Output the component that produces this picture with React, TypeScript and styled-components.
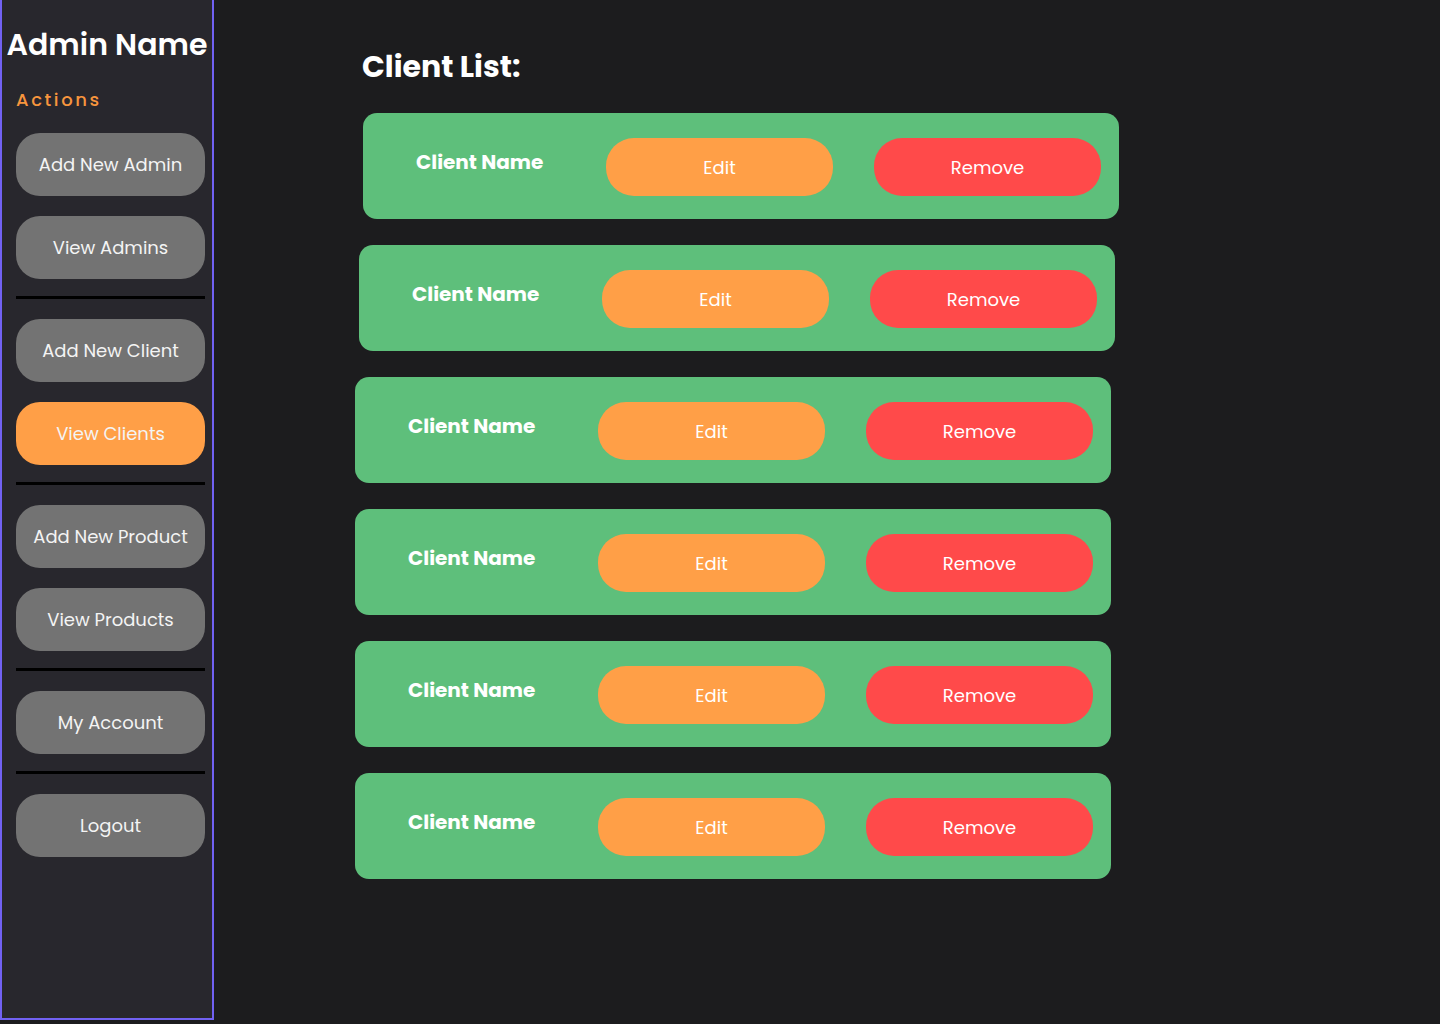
import React from "react";
import styled, { createGlobalStyle } from "styled-components";

const GlobalStyle = createGlobalStyle`
  * {
    box-sizing: border-box;
  }
  body {
    margin: 0;
    background: #1c1c1e;
    font-family: "Poppins", "Inter", "Noto Sans", sans-serif;
    color: #ffffff;
  }
`;

type NavItem = { label: string; active?: boolean } | "divider";

const navItems: NavItem[] = [
  { label: "Add New Admin" },
  { label: "View Admins" },
  "divider",
  { label: "Add New Client" },
  { label: "View Clients", active: true },
  "divider",
  { label: "Add New Product" },
  { label: "View Products" },
  "divider",
  { label: "My Account" },
  "divider",
  { label: "Logout" }
];

// the first two cards sit a little to the right in the reference
const clients = [
  { id: 1, name: "Client Name", shift: 8 },
  { id: 2, name: "Client Name", shift: 4 },
  { id: 3, name: "Client Name", shift: 0 },
  { id: 4, name: "Client Name", shift: 0 },
  { id: 5, name: "Client Name", shift: 0 },
  { id: 6, name: "Client Name", shift: 0 }
];

const App = () => {
  return (
    <>
      <GlobalStyle />
      <Layout>
        <Sidebar>
          <AdminName>Admin Name</AdminName>
          <Nav>
            <SectionLabel>Actions</SectionLabel>
            <NavList>
              {navItems.map((item, i) =>
                item === "divider" ? (
                  <Divider key={i} />
                ) : (
                  <NavButton key={i} $active={item.active}>
                    {item.label}
                  </NavButton>
                )
              )}
            </NavList>
          </Nav>
        </Sidebar>
        <Main>
          <Title>Client List:</Title>
          <CardList>
            {clients.map((client) => (
              <ClientCard key={client.id} $shift={client.shift}>
                <ClientName>{client.name}</ClientName>
                <ActionButton $variant="edit">Edit</ActionButton>
                <Gap />
                <ActionButton $variant="remove">Remove</ActionButton>
              </ClientCard>
            ))}
          </CardList>
        </Main>
      </Layout>
    </>
  );
};

const Layout = styled.div`
  display: flex;
  align-items: flex-start;
  min-height: 1024px;
`;

const Sidebar = styled.aside`
  width: 214px;
  height: 1020px;
  flex-shrink: 0;
  background: #28272d;
  border: 2px solid #7161f2;
  border-top: 0;
  padding-top: 26px;
`;

const AdminName = styled.h1`
  margin: 0;
  text-align: center;
  font-size: 30px;
  font-weight: 600;
  line-height: 37px;
  color: #ffffff;
  white-space: nowrap;
`;

const Nav = styled.nav`
  padding: 0 7px 0 14px;
`;

const SectionLabel = styled.h2`
  margin: 26px 0 0;
  font-size: 18px;
  font-weight: 500;
  line-height: 22px;
  letter-spacing: 2.6px;
  color: #f7953d;
`;

const NavList = styled.div`
  display: flex;
  flex-direction: column;
  margin-top: 22px;
`;

const NavButton = styled.button<{ $active?: boolean }>`
  height: 63px;
  margin-bottom: 20px;
  border: 0;
  border-radius: 24px;
  background: ${({ $active }) => ($active ? "#ff9f47" : "#737373")};
  color: #f4f4f4;
  font-family: inherit;
  font-size: 18px;
  font-weight: 400;
  cursor: pointer;

  & + hr {
    margin-top: -3px;
  }
`;

const Divider = styled.hr`
  width: 100%;
  height: 3px;
  margin: 0 0 20px;
  border: 0;
  background: #000000;
`;

const Main = styled.main`
  flex: 1;
  padding: 48px 0 0 141px;
`;

const Title = styled.h1`
  margin: 0 0 0 7px;
  font-size: 30px;
  font-weight: 700;
  line-height: 38px;
  color: #ffffff;
`;

const CardList = styled.div`
  display: flex;
  flex-direction: column;
  gap: 26px;
  margin-top: 27px;
`;

const ClientCard = styled.div<{ $shift: number }>`
  display: flex;
  align-items: center;
  width: 756px;
  height: 106px;
  margin-left: ${({ $shift }) => $shift}px;
  padding: 0 18px 0 53px;
  border-radius: 14px;
  background: #5ebf7b;
`;

const ClientName = styled.span`
  width: 190px;
  margin-bottom: 8px;
  font-size: 20px;
  font-weight: 700;
  color: #ffffff;
`;

const ActionButton = styled.button<{ $variant: "edit" | "remove" }>`
  width: 227px;
  height: 58px;
  margin-top: 2px;
  border: 0;
  border-radius: 28px;
  background: ${({ $variant }) => ($variant === "edit" ? "#ff9f47" : "#ff4a4a")};
  color: #ffffff;
  font-family: inherit;
  font-size: 18px;
  cursor: pointer;
`;

const Gap = styled.span`
  width: 41px;
`;

export default App;
